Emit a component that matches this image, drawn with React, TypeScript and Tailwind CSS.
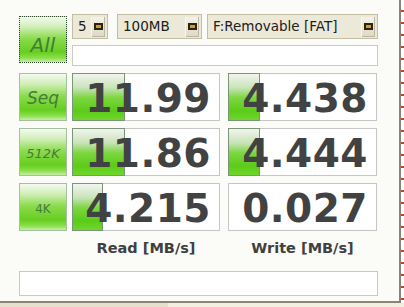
const btnBg =
  'bg-[linear-gradient(to_bottom,#f4faf0_0%,#d0eeb6_22%,#8adb4c_48%,#66ce20_78%,#88de46_90%,#c4eea2_100%)]';
const barBg =
  'bg-[linear-gradient(to_bottom,#f2f4f0_0%,#c8e4b8_30%,#7cd640_52%,#5ccb18_80%,#6fd62c_100%)]';

const rows = [
  { label: 'Seq', read: '11.99', write: '4.438', rBar: 53, wBar: 32, cls: 'text-[17px] italic' },
  { label: '512K', read: '11.86', write: '4.444', rBar: 53, wBar: 32, cls: 'text-[13px] italic' },
  { label: '4K', read: '4.215', write: '0.027', rBar: 31, wBar: 0, cls: 'text-[12px]' },
];

const DropButton = () => (
  <div className="w-[14px] self-stretch flex items-center justify-center border-l border-[#f8f6ee] bg-[linear-gradient(to_bottom,#f4f2e8,#dcd8c4)] shadow-[inset_-1px_-1px_0_#bdb7a2]">
    <div className="w-[9px] h-[7px] bg-[#2c2410] flex items-center justify-center">
      <div className="w-[5px] h-[3px] bg-[#c8a030]" />
    </div>
  </div>
);

const Combo = ({ text, w }: { text: string; w: string }) => (
  <div className={`${w} h-[25px] flex items-center border border-[#c4bca4] bg-[#ece9d8] pl-[5px] pr-[2px]`}>
    <span className="flex-1 text-[13.5px] text-[#202020]">{text}</span>
    <div className="h-[20px] flex"><DropButton /></div>
  </div>
);

const Cell = ({ value, bar, w }: { value: string; bar: number; w: string }) => (
  <div className={`${w} h-[48px] relative border border-[#c6c6c6] bg-white`}>
    {bar > 0 && (
      <div
        className={`absolute -left-px -top-px h-[48px] border border-[#7c9478] ${barBg}`}
        style={{ width: bar }}
      />
    )}
    <div className="relative h-full flex items-center justify-end pr-[8px] pt-[2px] font-['DejaVu_Sans',sans-serif] font-bold text-[39px] leading-none text-[#424242] tracking-[0.5px]">
      {value}
    </div>
  </div>
);

export default function App() {
  return (
    <div className="w-[404px] h-[307px] bg-[#e4e0cc] relative overflow-hidden font-['DejaVu_Sans',sans-serif]">
      <div className="absolute right-0 top-0 w-[3px] h-[303px] bg-[repeating-linear-gradient(to_bottom,#fff_0px,#fff_10px,#c04040_10px,#c04040_12px)]" />
      <div className="absolute left-[168px] bottom-0 w-[236px] h-[4px] bg-[#f2eee0]" />
      <div className="w-[401px] h-[303px] bg-[#fbfbf7] border-r-2 border-b-2 border-[#8a8472] pl-[19px] pt-[14px]">
        <div className="flex gap-[5px]">
          <div
            className={`w-[48px] h-[47px] mt-[2px] flex items-center justify-center border border-dotted border-[#2a4a2a] ${btnBg}`}
          >
            <span className="text-[20px] italic text-[#447c3a] mt-[10px]">All</span>
          </div>
          <div className="w-[306px] flex flex-col">
            <div className="flex">
              <Combo text="5" w="w-[36px]" />
              <div className="w-[9px]" />
              <Combo text="100MB" w="w-[85px]" />
              <div className="w-[5px]" />
              <Combo text="F:Removable [FAT]" w="w-[171px]" />
            </div>
            <div className="mt-[6px] h-[21px] border border-[#cacaca] bg-white" />
          </div>
        </div>
        <div className="mt-[7px] flex flex-col gap-[7px]">
          {rows.map((r) => (
            <div key={r.label} className="flex">
              <div
                className={`w-[48px] h-[48px] flex items-center justify-center border border-[#a4c0a0] ${btnBg}`}
              >
                <span className={`${r.cls} text-[#447c3a] mt-[4px]`}>{r.label}</span>
              </div>
              <div className="w-[5px]" />
              <Cell value={r.read} bar={r.rBar} w="w-[148px]" />
              <div className="w-[8px]" />
              <Cell value={r.write} bar={r.wBar} w="w-[149px]" />
            </div>
          ))}
        </div>
        <div className="flex mt-[7px] h-[22px] items-center">
          <div className="w-[53px]" />
          <div className="w-[148px] text-center font-bold text-[14.5px] text-[#404040]">Read [MB/s]</div>
          <div className="w-[8px]" />
          <div className="w-[149px] text-center font-bold text-[14.5px] text-[#404040]">Write [MB/s]</div>
        </div>
        <div className="mt-[11px] w-[359px] h-[25px] border border-[#c8c8c8] bg-white" />
      </div>
    </div>
  );
}
